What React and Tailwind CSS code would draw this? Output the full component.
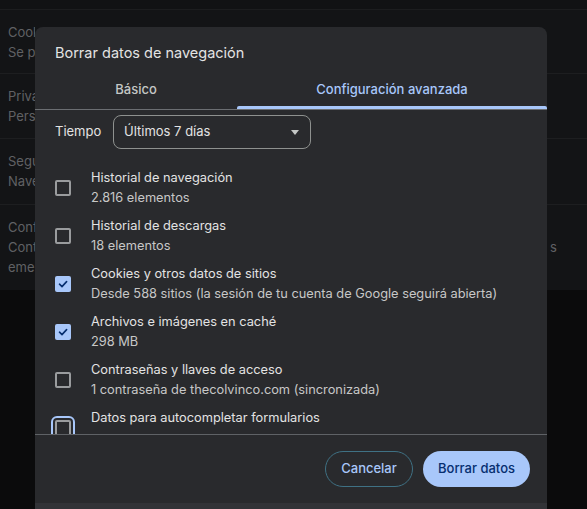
import React from "react";

const font = { fontFamily: "Inter, 'Noto Sans', 'Liberation Sans', sans-serif" };

const rows = [
  { title: "Historial de navegación", sub: "2.816 elementos", checked: false },
  { title: "Historial de descargas", sub: "18 elementos", checked: false },
  { title: "Cookies y otros datos de sitios", sub: "Desde 588 sitios (la sesión de tu cuenta de Google seguirá abierta)", checked: true },
  { title: "Archivos e imágenes en caché", sub: "298 MB", checked: true },
  { title: "Contraseñas y llaves de acceso", sub: "1 contraseña de thecolvinco.com (sincronizada)", checked: false },
  { title: "Datos para autocompletar formularios", sub: "", checked: false, focused: true },
];

const bgRows = [
  { lines: ["Cookies", "Se permiten"], h: "h-[64px]", right: "" },
  { lines: ["Privacidad", "Personalizar"], h: "h-[65px]", right: "" },
  { lines: ["Seguridad", "Navegación"], h: "h-[66px]", right: "" },
  { lines: ["Configuración", "Controla", "emergentes"], h: "h-[85px]", right: "s" },
];

function Checkbox({ checked, focused }) {
  const box = checked ? (
    <div className="w-[16px] h-[16px] rounded-[2px] bg-[#a8c7fa] flex items-center justify-center">
      <svg width="12" height="12" viewBox="0 0 12 12" fill="none">
        <path d="M2.5 6.2 L5 8.6 L9.6 3.6" stroke="#062e6f" strokeWidth="1.6" strokeLinecap="round" strokeLinejoin="round" />
      </svg>
    </div>
  ) : (
    <div className="w-[16px] h-[16px] rounded-[2px] border-2 border-[#9a9c9e]" />
  );
  if (focused) {
    return (
      <div className="w-[24px] h-[24px] -m-[4px] rounded-[6px] border-2 border-[#a8c7fa] flex items-center justify-center">
        {box}
      </div>
    );
  }
  return box;
}

export default function App() {
  return (
    <div className="relative w-[587px] h-[509px] overflow-hidden bg-[#0b0b0c] text-[13px]" style={font}>
      {/* Dimmed settings page */}
      <div className="h-[10px] bg-[#111214] border-b border-[#1c1d1f]" />
      <div className="bg-[#131416] w-[587px]">
        {bgRows.map((r, i) => (
          <div
            key={i}
            className={`${r.h} flex justify-between text-[#606164] leading-[20px] whitespace-nowrap ${i < bgRows.length - 1 ? "border-b border-[#1d1e20]" : ""}`}
          >
            <div className="w-[35px] overflow-hidden pl-[8px] pt-[12px] flex flex-col">
              {r.lines.map((l, j) => (
                <span key={j}>{l}</span>
              ))}
            </div>
            <div className="w-[40px] pl-[3px] pt-[32px] overflow-hidden">{r.right}</div>
          </div>
        ))}
      </div>

      {/* Dialog */}
      <div className="absolute left-[35px] top-[27px] w-[512px] h-[490px] rounded-t-[8px] bg-[#292a2d] flex flex-col overflow-hidden">
        <div className="pt-[15px] px-[20px] h-[43px] text-[14.5px] leading-[22px] text-[#e3e3e3]">
          Borrar datos de navegación
        </div>
        <div className="flex h-[40px] border-b border-[#6b6e72] text-[13px] font-medium">
          <div className="w-[202px] flex items-center justify-center text-[#c4c7c5]">Básico</div>
          <div className="flex-1 relative flex items-center justify-center text-[#a8c7fa]">
            Configuración avanzada
            <div className="absolute left-0 right-0 bottom-0 h-[3px] bg-[#a8c7fa] rounded-t-[2px]" />
          </div>
        </div>
        <div className="flex items-center h-[40px] pl-[20px] pt-[4px]">
          <span className="w-[58px] text-[#e3e3e3]">Tiempo</span>
          <div className="w-[198px] h-[34px] rounded-[8px] border border-[#8e918f] flex items-center pl-[10px] pr-[11px] justify-between text-[#e3e3e3]">
            <span>Últimos 7 días</span>
            <svg width="8" height="5" viewBox="0 0 8 5">
              <path d="M0 0 L8 0 L4 5 Z" fill="#c4c7c5" />
            </svg>
          </div>
        </div>
        <div className="h-[284px] overflow-hidden pt-[18px] flex flex-col gap-[8px]">
          {rows.map((r, i) => (
            <div key={i} className="flex items-center h-[40px] shrink-0 pl-[20px]">
              <div className="w-[36px] flex">
                <Checkbox checked={r.checked} focused={r.focused} />
              </div>
              <div className="flex flex-col leading-[20px] text-[12.8px]">
                <span className="text-[#e3e3e3]">{r.title}</span>
                <span className="text-[#c7c7c7] h-[20px]">{r.sub}</span>
              </div>
            </div>
          ))}
        </div>
        <div className="border-t border-[#5f6266] h-[69px] flex items-center justify-end gap-[10px] pr-[17px]">
          <button className="w-[88px] h-[36px] rounded-full border border-[#3f7184] text-[#a8c7fa] text-[13px] font-medium">
            Cancelar
          </button>
          <button className="w-[107px] h-[36px] rounded-full bg-[#a8c7fa] text-[#062e6f] text-[13px] font-medium">
            Borrar datos
          </button>
        </div>
        <div className="flex-1 bg-[#323337]" />
      </div>
    </div>
  );
}
